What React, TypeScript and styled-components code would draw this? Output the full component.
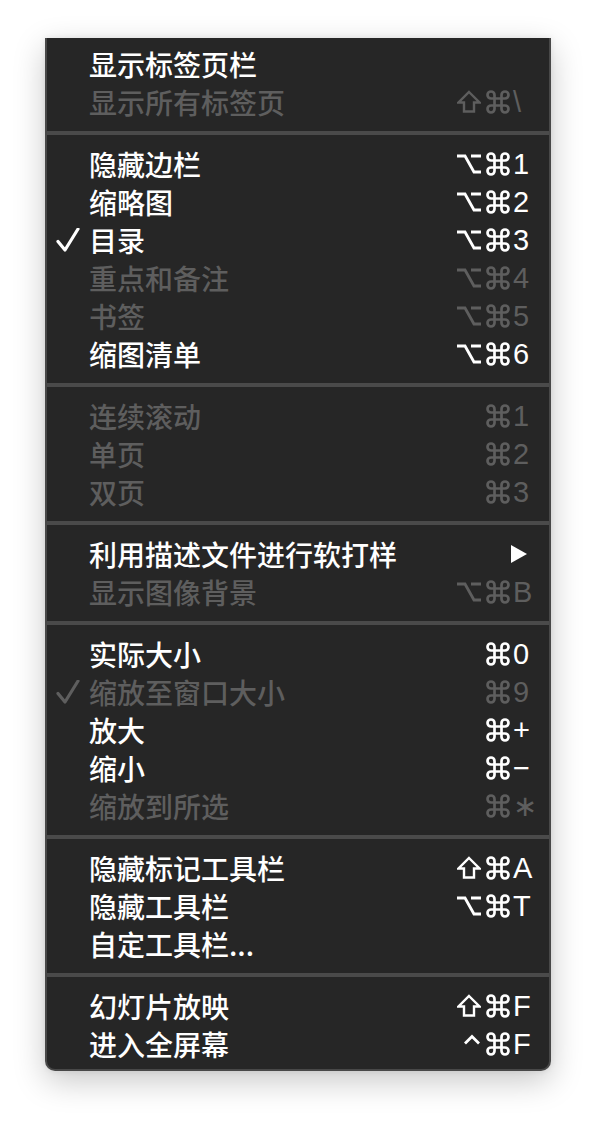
import React from 'react';
import styled, { createGlobalStyle } from 'styled-components';

type Mod = 'shift' | 'option' | 'cmd' | 'ctrl';

type Item = {
  label: string;
  mods?: Mod[];
  keyChar?: string;
  disabled?: boolean;
  checked?: boolean;
  submenu?: boolean;
};

// 菜单分组，每组之间放分隔线
const groups: Item[][] = [
  [
    { label: '显示标签页栏' },
    { label: '显示所有标签页', mods: ['shift', 'cmd'], keyChar: '\\', disabled: true },
  ],
  [
    { label: '隐藏边栏', mods: ['option', 'cmd'], keyChar: '1' },
    { label: '缩略图', mods: ['option', 'cmd'], keyChar: '2' },
    { label: '目录', mods: ['option', 'cmd'], keyChar: '3', checked: true },
    { label: '重点和备注', mods: ['option', 'cmd'], keyChar: '4', disabled: true },
    { label: '书签', mods: ['option', 'cmd'], keyChar: '5', disabled: true },
    { label: '缩图清单', mods: ['option', 'cmd'], keyChar: '6' },
  ],
  [
    { label: '连续滚动', mods: ['cmd'], keyChar: '1', disabled: true },
    { label: '单页', mods: ['cmd'], keyChar: '2', disabled: true },
    { label: '双页', mods: ['cmd'], keyChar: '3', disabled: true },
  ],
  [
    { label: '利用描述文件进行软打样', submenu: true },
    { label: '显示图像背景', mods: ['option', 'cmd'], keyChar: 'B', disabled: true },
  ],
  [
    { label: '实际大小', mods: ['cmd'], keyChar: '0' },
    { label: '缩放至窗口大小', mods: ['cmd'], keyChar: '9', disabled: true, checked: true },
    { label: '放大', mods: ['cmd'], keyChar: '+' },
    { label: '缩小', mods: ['cmd'], keyChar: '−' },
    { label: '缩放到所选', mods: ['cmd'], keyChar: '∗', disabled: true },
  ],
  [
    { label: '隐藏标记工具栏', mods: ['shift', 'cmd'], keyChar: 'A' },
    { label: '隐藏工具栏', mods: ['option', 'cmd'], keyChar: 'T' },
    { label: '自定工具栏...' },
  ],
  [
    { label: '幻灯片放映', mods: ['shift', 'cmd'], keyChar: 'F' },
    { label: '进入全屏幕', mods: ['ctrl', 'cmd'], keyChar: 'F' },
  ],
];

function ModIcon({ mod }: { mod: Mod }) {
  if (mod === 'cmd') {
    return (
      <IconSvg viewBox="0 0 24 24" width="28" height="28">
        <path
          d="M15 6v12a3 3 0 1 0 3-3H6a3 3 0 1 0 3 3V6a3 3 0 1 0-3 3h12a3 3 0 1 0-3-3"
          fill="none"
          stroke="currentColor"
          strokeWidth="2.3"
        />
      </IconSvg>
    );
  }
  if (mod === 'option') {
    return (
      <IconSvg viewBox="0 0 24 24" width="24" height="24">
        <path d="M0 4h8l9 16h7M14 4h10" fill="none" stroke="currentColor" strokeWidth="2.8" />
      </IconSvg>
    );
  }
  if (mod === 'shift') {
    return (
      <IconSvg viewBox="0 0 24 24" width="24" height="24">
        <path
          d="M12 2L22.5 12.5H17V21.5H7V12.5H1.5Z"
          fill="none"
          stroke="currentColor"
          strokeWidth="2.4"
          strokeLinejoin="miter"
        />
      </IconSvg>
    );
  }
  return (
    <IconSvg viewBox="0 0 18 24" width="18" height="24">
      <path d="M2 11.5L9 4.5L16 11.5" fill="none" stroke="currentColor" strokeWidth="2.8" />
    </IconSvg>
  );
}

function CheckMark() {
  return (
    <CheckSvg viewBox="0 0 24 24" width="24" height="24">
      <path d="M2 13.5 L9 22 L22 1" fill="none" stroke="currentColor" strokeWidth="3.2" strokeLinecap="round" strokeLinejoin="round" />
    </CheckSvg>
  );
}

function SubArrow() {
  return (
    <ArrowSvg viewBox="0 0 18 18" width="18" height="18">
      <polygon points="1,0 17,9 1,18" fill="currentColor" />
    </ArrowSvg>
  );
}

function MenuRow({ item }: { item: Item }) {
  return (
    <Row $disabled={item.disabled}>
      <CheckSlot>{item.checked && <CheckMark />}</CheckSlot>
      <Label>{item.label}</Label>
      {item.submenu ? (
        <Shortcut>
          <SubArrow />
        </Shortcut>
      ) : (
        item.mods && (
          <Shortcut>
            <Mods>
              {item.mods.map((m) => (
                <ModIcon key={m} mod={m} />
              ))}
            </Mods>
            <KeyChar $symbol={item.keyChar === '∗'}>{item.keyChar}</KeyChar>
          </Shortcut>
        )
      )}
    </Row>
  );
}

export default function App() {
  return (
    <>
      <GlobalStyle />
      <Page>
        <Menu>
          {groups.map((group, i) => (
            <React.Fragment key={i}>
              {i > 0 && <Separator />}
              {group.map((item) => (
                <MenuRow key={item.label} item={item} />
              ))}
            </React.Fragment>
          ))}
        </Menu>
      </Page>
    </>
  );
}

const GlobalStyle = createGlobalStyle`
  html, body {
    margin: 0;
    padding: 0;
    background: #ffffff;
  }
  body {
    font-family: "Noto Sans CJK SC", "Noto Sans", sans-serif;
  }
`;

const Page = styled.div`
  width: 596px;
  height: 1126px;
  padding: 38px 0 0 45px;
  box-sizing: border-box;
  overflow: hidden;
`;

const Menu = styled.div`
  width: 506px;
  box-sizing: border-box;
  background: #262626;
  border: 2px solid #484848;
  border-top: none;
  border-radius: 0 0 10px 10px;
  padding: 7px 0 6px;
  box-shadow: 0 10px 32px rgba(0, 0, 0, 0.22), 0 0 6px rgba(0, 0, 0, 0.08);
`;

const Row = styled.div<{ $disabled?: boolean }>`
  display: flex;
  align-items: center;
  height: 38px;
  padding-right: 16px;
  color: ${(p) => (p.$disabled ? '#5e5e5e' : '#ffffff')};
`;

const CheckSlot = styled.div`
  width: 42px;
  padding-left: 9px;
  box-sizing: border-box;
  display: flex;
  align-items: center;
`;

const CheckSvg = styled.svg`
  display: block;
  margin-top: -1px;
`;

const Label = styled.span`
  flex: 1;
  font-family: "Noto Sans CJK SC", sans-serif;
  font-size: 28px;
  font-weight: 500;
  line-height: 38px;
  white-space: nowrap;
`;

const Shortcut = styled.div`
  display: flex;
  align-items: center;
  justify-content: flex-end;
  height: 38px;
`;

const Mods = styled.div`
  display: flex;
  align-items: center;
  gap: 3px;
`;

const IconSvg = styled.svg`
  display: block;
`;

const KeyChar = styled.span<{ $symbol?: boolean }>`
  width: 20px;
  margin-left: 1px;
  font-family: ${(p) => (p.$symbol ? '"DejaVu Sans"' : '"Liberation Sans"')}, sans-serif;
  font-size: 29px;
  line-height: 38px;
  text-align: left;
`;

const ArrowSvg = styled.svg`
  display: block;
  margin-right: 5px;
`;

const Separator = styled.div`
  height: 4px;
  margin: 10px 0;
  background: #4a4a4a;
`;
